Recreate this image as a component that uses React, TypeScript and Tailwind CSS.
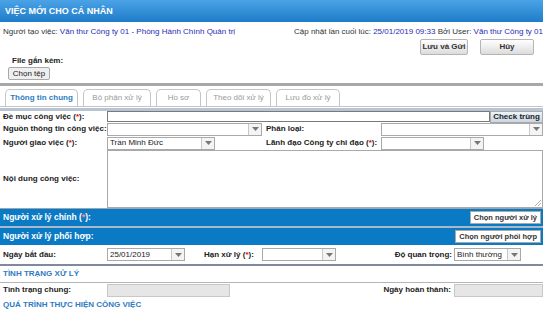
import React from 'react';

const font = { fontFamily: '"Liberation Sans", Arial, sans-serif' };

const Req = () => (
  <span>
    (<span className="text-red-600">*</span>):
  </span>
);

const Arrow = () => (
  <div className="flex h-full w-[13px] items-center justify-center border-l border-[#c8c8c8] bg-[#f4f4f4]">
    <svg width="7" height="4" viewBox="0 0 7 4">
      <path d="M0 0h7L3.5 4z" fill="#777" />
    </svg>
  </div>
);

const Select: React.FC<{ w: string; value?: string }> = ({ w, value }) => (
  <div className={`flex h-[13px] items-center border border-[#a9a9a9] bg-white ${w}`}>
    <span className="flex-1 truncate whitespace-nowrap pl-[2px] text-[8px] text-[#222]">{value}</span>
    <Arrow />
  </div>
);

const Label: React.FC<{ children: React.ReactNode; w?: string }> = ({ children, w = 'w-[107px]' }) => (
  <div className={`${w} shrink-0 whitespace-nowrap pl-[3px] text-[8px] font-bold text-[#222]`}>{children}</div>
);

const tabs = ['Thông tin chung', 'Bộ phận xử lý', 'Hồ sơ', 'Theo dõi xử lý', 'Lưu đồ xử lý'];
const tabW = ['w-[73px]', 'w-[68px]', 'w-[45px]', 'w-[65px]', 'w-[64px]'];

export default function App() {
  return (
    <div className="h-[328px] w-[543px] overflow-hidden bg-white text-[8px] leading-none" style={font}>
      {/* header */}
      <div className="flex h-[22px] items-center bg-gradient-to-b from-[#4aa3e6] to-[#1d7cc9] pl-[5px] text-[9px] font-bold text-white">
        VIỆC MỚI CHO CÁ NHÂN
      </div>

      <div className="flex h-[16px] items-center justify-between whitespace-nowrap px-[3px] pt-[3px] text-[8px] text-[#333]">
        <div>
          Người tạo việc: <span className="text-[#2b2bb5]">Văn thư Công ty 01 - Phòng Hành Chính Quản trị</span>
        </div>
        <div className="-mr-[3px]">
          Cập nhật lần cuối lúc: <span className="text-[#2b2bb5]">25/01/2019 09:33</span> Bởi User:{' '}
          <span className="text-[#2b2bb5]">Văn thư Công ty 01</span>
        </div>
      </div>

      <div className="flex h-[17px] items-end justify-end gap-[12px] pr-[9px]">
        <button className="h-[16px] w-[48px] rounded-[2px] border border-[#b5b5b5] bg-gradient-to-b from-white to-[#dcdcdc] text-[8px] font-bold text-[#333]">
          Lưu và Gửi
        </button>
        <button className="h-[16px] w-[54px] rounded-[2px] border border-[#b5b5b5] bg-gradient-to-b from-white to-[#dcdcdc] text-[8px] font-bold text-[#333]">
          Hủy
        </button>
      </div>

      <div className="flex h-[10px] items-end pl-[12px] text-[8px] font-bold text-[#222]">File gắn kèm:</div>
      <div className="flex h-[15px] items-end pl-[8px]">
        <button className="h-[13px] w-[42px] rounded-[2px] border border-[#a9a9a9] bg-[#efefef] text-[8px] text-[#222]">
          Chọn tệp
        </button>
      </div>

      <div className="mt-[3px] h-[3px] bg-[#a8a8a8]" />

      {/* tabs */}
      <div className="flex h-[21px] items-end gap-[5px] border-b border-[#c5c5c5] pl-[5px]">
        {tabs.map((t, i) => (
          <div
            key={t}
            className={`flex h-[17px] items-center justify-center whitespace-nowrap rounded-t-[5px] border border-b-0 border-[#c5c5c5] text-[8px] ${tabW[i]} ${
              i === 0 ? 'font-bold text-[#2e7bbf]' : 'text-[#9a9a9a]'
            }`}
          >
            {t}
          </div>
        ))}
      </div>
      <div className="h-[1px]" />
      <div className="h-[3px] bg-[#b8c4d4]" />

      {/* form */}
      <div className="flex h-[11px] items-center">
        <Label>
          Đề mục công việc <Req />
        </Label>
        <div className="h-[11px] flex-1 border border-[#7a7a7a] bg-white" />
        <button className="h-[12px] w-[53px] whitespace-nowrap border border-[#a9a9a9] bg-gradient-to-b from-[#eef3f8] to-[#c9d6e4] text-[8px] font-bold text-[#222]">
          Check trùng
        </button>
      </div>

      <div className="flex h-[14px] items-center">
        <Label>Nguồn thông tin công việc:</Label>
        <Select w="w-[155px]" />
        <div className="w-[119px] shrink-0 pl-[4px] text-[8px] font-bold text-[#222]">Phân loại:</div>
        <Select w="flex-1" />
      </div>

      <div className="flex h-[14px] items-center">
        <Label>
          Người giao việc <Req />
        </Label>
        <Select w="w-[108px]" value="Trần Minh Đức" />
        <div className="w-[166px] shrink-0 whitespace-nowrap pl-[51px] text-[8px] font-bold text-[#222]">
          Lãnh đạo Công ty chỉ đạo <Req />
        </div>
        <Select w="w-[103px]" />
      </div>

      <div className="flex h-[58px] items-center">
        <Label>Nội dung công việc:</Label>
        <div className="relative h-full flex-1 border border-[#a9a9a9] bg-white">
          <svg className="absolute bottom-[1px] right-[1px]" width="6" height="6" viewBox="0 0 6 6">
            <path d="M6 0L0 6M6 3L3 6" stroke="#999" strokeWidth="0.8" />
          </svg>
        </div>
      </div>

      <div className="h-[1px] bg-[#9aa5b3]" />
      <div className="flex h-[17px] items-center justify-between bg-[#0b7ac4] pl-[3px] pr-[2px]">
        <span className="whitespace-nowrap text-[8.5px] font-bold text-white">
          Người xử lý chính (<span className="text-[#ff8a8a]">*</span>):
        </span>
        <button className="h-[13px] whitespace-nowrap border border-[#a9a9a9] bg-white px-[3px] text-[7.5px] font-bold text-[#333]">
          Chọn người xử lý
        </button>
      </div>
      <div className="h-[2px] bg-[#a9b8c8]" />
      <div className="flex h-[17px] items-center justify-between bg-[#0b7ac4] pl-[3px] pr-[2px]">
        <span className="whitespace-nowrap text-[8.5px] font-bold text-white">Người xử lý phối hợp:</span>
        <button className="h-[13px] whitespace-nowrap border border-[#a9a9a9] bg-white px-[3px] text-[7.5px] font-bold text-[#333]">
          Chọn người phối hợp
        </button>
      </div>

      <div className="flex h-[19px] items-center">
        <Label>Ngày bắt đầu:</Label>
        <Select w="w-[78px]" value="25/01/2019" />
        <div className="w-[77px] shrink-0 whitespace-nowrap pl-[19px] text-[8px] font-bold text-[#222]">
          Hạn xử lý <Req />
        </div>
        <Select w="w-[74px]" />
        <div className="w-[118px] shrink-0 whitespace-nowrap pr-[2px] text-right text-[8px] font-bold text-[#222]">
          Độ quan trọng:
        </div>
        <Select w="w-[67px]" value="Bình thường" />
      </div>

      <div className="h-[2px] bg-[#7f8b9c]" />
      <div className="flex h-[16px] items-center pl-[3px] text-[8px] font-bold text-[#2e7bbf]">TÌNH TRẠNG XỬ LÝ</div>
      <div className="h-[1px] bg-[#b5b5b5]" />

      <div className="flex h-[14px] items-center">
        <Label>Tình trạng chung:</Label>
        <div className="h-[13px] w-[123px] border border-[#c8c8c8] bg-[#e6e6e6]" />
        <div className="flex-1 whitespace-nowrap pr-[3px] text-right text-[8px] font-bold text-[#222]">Ngày hoàn thành:</div>
        <div className="h-[13px] w-[89px] border border-[#c8c8c8] bg-[#e6e6e6]" />
      </div>

      <div className="flex h-[16px] items-center pl-[3px] text-[8px] font-bold text-[#2e7bbf]">
        QUÁ TRÌNH THỰC HIỆN CÔNG VIỆC
      </div>
    </div>
  );
}
